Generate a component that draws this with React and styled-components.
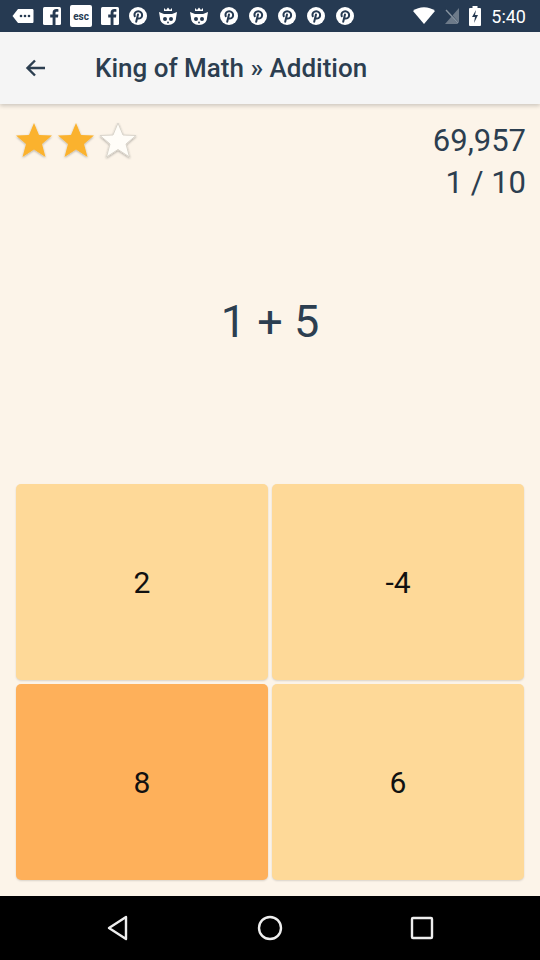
import React from "react";
import styled, { createGlobalStyle } from "styled-components";

const GlobalStyle = createGlobalStyle`
  html, body {
    margin: 0;
    padding: 0;
    background: #000;
  }
  body {
    font-family: Roboto, "Liberation Sans", sans-serif;
  }
`;

const Screen = styled.div`
  width: 540px;
  height: 960px;
  display: flex;
  flex-direction: column;
  overflow: hidden;
`;

const StatusBar = styled.div`
  height: 32px;
  background: #263a52;
  display: flex;
  align-items: center;
  padding: 0 14px 0 12px;
  gap: 9px;
  color: #fff;
  flex-shrink: 0;
`;

const StatusRight = styled.div`
  margin-left: auto;
  display: flex;
  align-items: center;
  gap: 10px;
  font-size: 18px;
`;

const AppBar = styled.div`
  height: 72px;
  background: #f5f5f5;
  display: flex;
  align-items: center;
  box-shadow: 0 2px 4px rgba(0, 0, 0, 0.18);
  position: relative;
  z-index: 1;
  flex-shrink: 0;
`;

const BackButton = styled.div`
  width: 72px;
  height: 72px;
  display: flex;
  align-items: center;
  justify-content: center;
`;

const Title = styled.div`
  margin-left: 23px;
  font-size: 26px;
  font-weight: 500;
  color: #2c3e50;
`;

const Content = styled.div`
  flex: 1;
  background: #fcf4e9;
  display: flex;
  flex-direction: column;
`;

const Header = styled.div`
  display: flex;
  justify-content: space-between;
  padding: 16px 14px 0 14px;
`;

const Stars = styled.div`
  display: flex;
  gap: 2px;
  height: 40px;
`;

const Stats = styled.div`
  text-align: right;
  font-size: 31px;
  line-height: 42px;
  color: #2c3e50;
  margin-top: 0;
`;

const Question = styled.div`
  margin-top: 88px;
  text-align: center;
  font-size: 45px;
  line-height: 60px;
  color: #2c3e50;
`;

const Grid = styled.div`
  margin-top: auto;
  display: grid;
  grid-template-columns: 1fr 1fr;
  gap: 4px;
  padding: 0 16px 16px;
`;

const Tile = styled.div`
  height: 196px;
  border-radius: 5px;
  background: ${(p) => (p.$selected ? "#feb05a" : "#fed998")};
  box-shadow: 0 1px 2px rgba(0, 0, 0, 0.14);
  display: flex;
  align-items: center;
  justify-content: center;
  font-size: 30px;
  color: #111;
`;

const NavBar = styled.div`
  height: 64px;
  background: #000;
  display: flex;
  align-items: center;
  justify-content: space-between;
  padding: 0 106px;
  flex-shrink: 0;
`;

const Star = ({ filled }) => (
  <svg width="40" height="40" viewBox="0 0 40 40">
    <defs>
      <filter id={filled ? "sf" : "se"} x="-20%" y="-20%" width="140%" height="140%">
        <feDropShadow dx="0" dy="1" stdDeviation="1" floodColor="#000" floodOpacity="0.3" />
      </filter>
    </defs>
    <polygon
      points="20,3 25,15 38,15.5 28,24 31.5,37 20,29.5 8.5,37 12,24 2,15.5 15,15"
      fill={filled ? "#fbb22e" : "#fffdf8"}
      stroke={filled ? "none" : "#d9d4cb"}
      strokeWidth="1"
      strokeLinejoin="round"
      filter={`url(#${filled ? "sf" : "se"})`}
    />
  </svg>
);

const Pin = () => (
  <svg width="20" height="20" viewBox="0 0 20 20">
    <circle cx="10" cy="10" r="9" fill="#fff" />
    <path
      d="M8.2 15.8 L10 8.5 M10 12.5 C13.5 13 14.5 10 14 8 C13.4 5.5 10.6 4.8 8.6 5.6 C6.6 6.4 6 8.6 6.8 10.2"
      stroke="#263a52"
      strokeWidth="2"
      fill="none"
      strokeLinecap="round"
    />
  </svg>
);

const Fb = () => (
  <svg width="18" height="18" viewBox="0 0 18 18">
    <rect width="18" height="18" rx="1.5" fill="#fff" />
    <path d="M12.5 18 V10.5 H15 L15.3 7.6 H12.5 V6 C12.5 5.2 12.8 4.7 14 4.7 H15.4 V2.2 C15 2.1 14.2 2 13.3 2 C11 2 9.6 3.3 9.6 5.7 V7.6 H7.2 V10.5 H9.6 V18 Z" fill="#263a52" />
  </svg>
);

const Cat = () => (
  <svg width="22" height="20" viewBox="0 0 22 20">
    <path d="M7 2 L9 4 L11 1.5 L13 4 L15 2 L15 5 H7 Z" fill="#fff" />
    <path d="M2 6 L7 8 H15 L20 6 L19 12 C19 16 15.5 19 11 19 C6.5 19 3 16 3 12 Z" fill="#fff" />
    <circle cx="8" cy="13" r="2" fill="#263a52" />
    <circle cx="14" cy="13" r="2" fill="#263a52" />
    <circle cx="11" cy="16.5" r="0.9" fill="#263a52" />
  </svg>
);

const Msg = () => (
  <svg width="22" height="16" viewBox="0 0 22 16">
    <path d="M6 1 H20 C21 1 21.5 1.5 21.5 2.5 V13.5 C21.5 14.5 21 15 20 15 H6 L0.5 8 Z" fill="#fff" />
    <circle cx="9" cy="8" r="1.3" fill="#263a52" />
    <circle cx="13" cy="8" r="1.3" fill="#263a52" />
    <circle cx="17" cy="8" r="1.3" fill="#263a52" />
  </svg>
);

const Esc = () => (
  <svg width="22" height="22" viewBox="0 0 22 22">
    <rect width="22" height="22" rx="2" fill="#fff" />
    <text x="11" y="14.5" textAnchor="middle" fontSize="10" fontWeight="700" fontFamily="Roboto, sans-serif" fill="#263a52">
      esc
    </text>
  </svg>
);

export default function App() {
  return (
    <Screen>
      <GlobalStyle />
      <StatusBar>
        <Msg />
        <Fb />
        <Esc />
        <Fb />
        <Pin />
        <Cat />
        <Cat />
        <Pin />
        <Pin />
        <Pin />
        <Pin />
        <Pin />
        <StatusRight>
          <svg width="22" height="18" viewBox="0 0 22 18">
            <path d="M0 4 C6 -1 16 -1 22 4 L11 17 Z" fill="#fff" />
          </svg>
          <svg width="14" height="18" viewBox="0 0 14 18">
            <path d="M0 17 L14 1 V17 Z" fill="#6d7a89" />
            <path d="M0 1 L14 17" stroke="#263a52" strokeWidth="1.6" />
            <path d="M1 3 L13 16" stroke="#8894a1" strokeWidth="1.4" />
          </svg>
          <svg width="12" height="20" viewBox="0 0 12 20">
            <rect x="3.5" y="0" width="5" height="2" fill="#fff" />
            <rect x="0" y="2" width="12" height="18" rx="1" fill="#fff" />
            <path d="M7 4 L3 11 H6 L5 17 L9 9 H6 Z" fill="#263a52" />
          </svg>
          <span>5:40</span>
        </StatusRight>
      </StatusBar>
      <AppBar>
        <BackButton>
          <svg width="26" height="26" viewBox="0 0 26 26">
            <path d="M22 13 H5 M12 5.5 L4.5 13 L12 20.5" stroke="#2c3e50" strokeWidth="2.4" fill="none" />
          </svg>
        </BackButton>
        <Title>King of Math » Addition</Title>
      </AppBar>
      <Content>
        <Header>
          <Stars>
            <Star filled />
            <Star filled />
            <Star />
          </Stars>
          <Stats>
            <div>69,957</div>
            <div>1 / 10</div>
          </Stats>
        </Header>
        <Question>1 + 5</Question>
        <Grid>
          <Tile>2</Tile>
          <Tile>-4</Tile>
          <Tile $selected>8</Tile>
          <Tile>6</Tile>
        </Grid>
      </Content>
      <NavBar>
        <svg width="24" height="26" viewBox="0 0 24 26">
          <path d="M20 2 L3 13 L20 24 Z" stroke="#eee" strokeWidth="2.4" fill="none" strokeLinejoin="round" />
        </svg>
        <svg width="26" height="26" viewBox="0 0 26 26">
          <circle cx="13" cy="13" r="11" stroke="#eee" strokeWidth="2.4" fill="none" />
        </svg>
        <svg width="24" height="24" viewBox="0 0 24 24">
          <rect x="2" y="2" width="20" height="20" rx="1" stroke="#eee" strokeWidth="2.4" fill="none" />
        </svg>
      </NavBar>
    </Screen>
  );
}
